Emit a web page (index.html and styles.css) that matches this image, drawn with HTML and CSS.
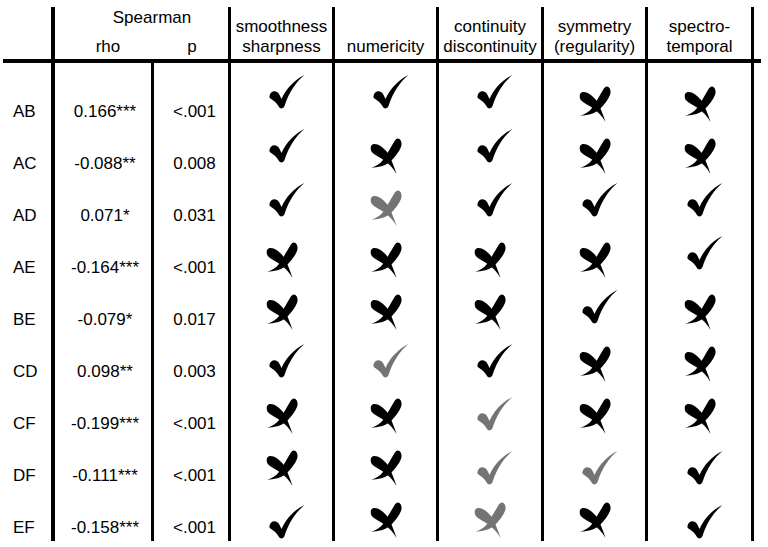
FILE: index.html
```html
<!DOCTYPE html>
<html>
<head>
<meta charset="utf-8">
<link rel="stylesheet" href="styles.css">
</head>
<body>
<svg class="defs" width="0" height="0" aria-hidden="true">
  <symbol id="chk" viewBox="0 0 36 34">
    <path d="M0.5,21 C1,17 5,15 8,17 C10,18 11,21 12.5,24 C17,14 25,5 35.5,0 C27,7 20,17 15.5,31 C14.5,34 11,34 10,32 C8,28 4,25 1.5,23.5 C0.5,23 0.3,22 0.5,21 Z"/>
  </symbol>
  <symbol id="crs" viewBox="0 0 32 36">
    <path d="M1,8 C2.5,5 7,5.5 10.5,8 C13.5,10 16.5,13 18.5,16 C21,21 24,28 26.5,36 C23,30 19,26 14.5,22.5 C10,19.5 4.5,17 1.8,14 C0.6,12.5 0.5,9.5 1,8 Z"/>
    <path d="M28,0.5 C31,1 32.5,5 31,9 C29,14 25,19 20,24 C15,28 8,29 1,30 C6,28 10,26 13,22 C17,16 21,9 24,4 C25,2 26.5,0.5 28,0.5 Z"/>
  </symbol>
</svg>

<div class="head">
  <div class="hc"></div>
  <div class="hc spear">
    <div class="sp-title">Spearman</div>
    <div class="sp-sub"><span class="rho">rho</span><span class="pp">p</span></div>
  </div>
  <div class="hc vl">smoothness<br>sharpness</div>
  <div class="hc vl">numericity</div>
  <div class="hc vl">continuity<br>discontinuity</div>
  <div class="hc vl">symmetry<br>(regularity)</div>
  <div class="hc vl last">spectro-<br>temporal</div>
</div>
<div class="rule"></div>
<div class="body">
  <div class="row r0">
    <div class="c lab">AB</div><div class="c rv">0.166***</div><div class="c pv">&lt;.001</div>
    <div class="c vl"><svg class="ck"><use href="#chk"/></svg></div>
    <div class="c vl"><svg class="ck"><use href="#chk"/></svg></div>
    <div class="c vl"><svg class="ck"><use href="#chk"/></svg></div>
    <div class="c vl"><svg class="cx"><use href="#crs"/></svg></div>
    <div class="c vl last"><svg class="cx"><use href="#crs"/></svg></div>
  </div>
  <div class="row r1">
    <div class="c lab">AC</div><div class="c rv">-0.088**</div><div class="c pv">0.008</div>
    <div class="c vl"><svg class="ck"><use href="#chk"/></svg></div>
    <div class="c vl"><svg class="cx"><use href="#crs"/></svg></div>
    <div class="c vl"><svg class="ck"><use href="#chk"/></svg></div>
    <div class="c vl"><svg class="cx"><use href="#crs"/></svg></div>
    <div class="c vl last"><svg class="cx"><use href="#crs"/></svg></div>
  </div>
  <div class="row r2">
    <div class="c lab">AD</div><div class="c rv">0.071*</div><div class="c pv">0.031</div>
    <div class="c vl"><svg class="ck"><use href="#chk"/></svg></div>
    <div class="c vl"><svg class="cx g"><use href="#crs"/></svg></div>
    <div class="c vl"><svg class="ck"><use href="#chk"/></svg></div>
    <div class="c vl"><svg class="ck"><use href="#chk"/></svg></div>
    <div class="c vl last"><svg class="ck"><use href="#chk"/></svg></div>
  </div>
  <div class="row r3">
    <div class="c lab">AE</div><div class="c rv">-0.164***</div><div class="c pv">&lt;.001</div>
    <div class="c vl"><svg class="cx"><use href="#crs"/></svg></div>
    <div class="c vl"><svg class="cx"><use href="#crs"/></svg></div>
    <div class="c vl"><svg class="cx"><use href="#crs"/></svg></div>
    <div class="c vl"><svg class="cx"><use href="#crs"/></svg></div>
    <div class="c vl last"><svg class="ck"><use href="#chk"/></svg></div>
  </div>
  <div class="row r4">
    <div class="c lab">BE</div><div class="c rv">-0.079*</div><div class="c pv">0.017</div>
    <div class="c vl"><svg class="cx"><use href="#crs"/></svg></div>
    <div class="c vl"><svg class="cx"><use href="#crs"/></svg></div>
    <div class="c vl"><svg class="cx"><use href="#crs"/></svg></div>
    <div class="c vl"><svg class="ck"><use href="#chk"/></svg></div>
    <div class="c vl last"><svg class="cx"><use href="#crs"/></svg></div>
  </div>
  <div class="row r5">
    <div class="c lab">CD</div><div class="c rv">0.098**</div><div class="c pv">0.003</div>
    <div class="c vl"><svg class="ck"><use href="#chk"/></svg></div>
    <div class="c vl"><svg class="ck g"><use href="#chk"/></svg></div>
    <div class="c vl"><svg class="ck"><use href="#chk"/></svg></div>
    <div class="c vl"><svg class="cx"><use href="#crs"/></svg></div>
    <div class="c vl last"><svg class="cx"><use href="#crs"/></svg></div>
  </div>
  <div class="row r6">
    <div class="c lab">CF</div><div class="c rv">-0.199***</div><div class="c pv">&lt;.001</div>
    <div class="c vl"><svg class="cx"><use href="#crs"/></svg></div>
    <div class="c vl"><svg class="cx"><use href="#crs"/></svg></div>
    <div class="c vl"><svg class="ck g"><use href="#chk"/></svg></div>
    <div class="c vl"><svg class="cx"><use href="#crs"/></svg></div>
    <div class="c vl last"><svg class="cx"><use href="#crs"/></svg></div>
  </div>
  <div class="row r7">
    <div class="c lab">DF</div><div class="c rv">-0.111***</div><div class="c pv">&lt;.001</div>
    <div class="c vl"><svg class="cx"><use href="#crs"/></svg></div>
    <div class="c vl"><svg class="cx"><use href="#crs"/></svg></div>
    <div class="c vl"><svg class="ck g"><use href="#chk"/></svg></div>
    <div class="c vl"><svg class="ck g"><use href="#chk"/></svg></div>
    <div class="c vl last"><svg class="ck"><use href="#chk"/></svg></div>
  </div>
  <div class="row r8">
    <div class="c lab">EF</div><div class="c rv">-0.158***</div><div class="c pv">&lt;.001</div>
    <div class="c vl"><svg class="ck"><use href="#chk"/></svg></div>
    <div class="c vl"><svg class="cx"><use href="#crs"/></svg></div>
    <div class="c vl"><svg class="cx g"><use href="#crs"/></svg></div>
    <div class="c vl"><svg class="cx"><use href="#crs"/></svg></div>
    <div class="c vl last"><svg class="ck"><use href="#chk"/></svg></div>
  </div>
</div>
</body>
</html>
```

FILE: styles.css
```css
* { box-sizing: border-box; }
html, body { background: #fff; }
body {
  margin: 0;
  font-family: "Liberation Sans", Arial, sans-serif;
  font-size: 17px;
  line-height: 20px;
  color: #000;
}
.defs { position: absolute; width: 0; height: 0; overflow: hidden; }

.head, .body {
  display: grid;
  grid-template-columns: 51px 100px 77px 104px 104px 105px 104px 109px;
  width: 754px;
}
.head {
  margin-top: 7px;
  height: 52px;
}
.rule {
  margin-left: 3px;
  width: 758px;
  height: 4px;
  background: #000;
}
.body {
  grid-template-rows: 62px repeat(8, 52px);
}
.row { display: contents; }

.vl { border-left: 3px solid #000; }
.last { border-right: 3px solid #000; }

.hc {
  display: flex;
  flex-direction: column;
  justify-content: flex-end;
  align-items: center;
  text-align: center;
  padding-bottom: 2px;
  white-space: nowrap;
}
.spear {
  grid-column: span 2;
  border-left: 4px solid #000;
  justify-content: space-between;
  align-items: stretch;
  padding-top: 1px;
}
.sp-title { padding-left: 21px; text-align: center; }
.sp-sub {
  display: grid;
  grid-template-columns: 96px 77px;
}
.rho { padding-left: 10px; text-align: center; }
.pp { padding-left: 5px; text-align: center; }

.c {
  display: flex;
  align-items: flex-end;
  justify-content: center;
  padding-bottom: 3px;
  white-space: nowrap;
}
.lab { justify-content: flex-start; padding-left: 13px; }
.rv { border-left: 4px solid #000; padding-left: 4px; }
.pv { border-left: 3px solid #000; padding-left: 7px; }

.ck { width: 36px; height: 34px; margin-left: 10px; margin-bottom: 2px; fill: currentColor; }
.cx { width: 32px; height: 36px; fill: currentColor; }
.g { color: #747474; }

/* checks drift from the text baseline row by row, as in the drawn figure */
.r0 .ck { margin-bottom: 13px; }
.r1 .ck { margin-bottom: 11px; }
.r2 .ck { margin-bottom: 9px; }
.r3 .ck { margin-bottom: 8px; }
.r4 .ck { margin-bottom: 6px; }
.r5 .ck { margin-bottom: 4px; }
.r6 .ck { margin-bottom: 3px; }
.r7 .ck { margin-bottom: 1px; }
.r8 .ck { margin-bottom: -1px; }
```
